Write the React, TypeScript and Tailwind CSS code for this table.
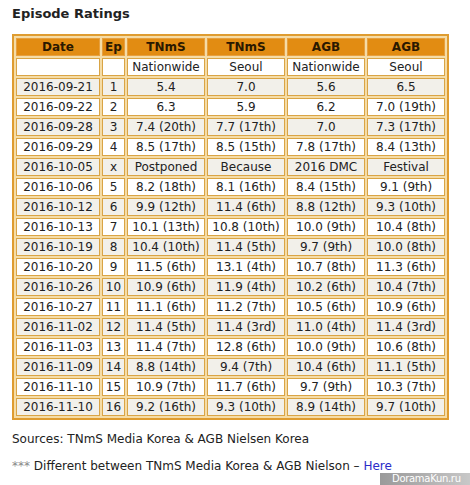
import React from 'react'

type Row = [string, string, string, string, string, string]

const ROWS: Row[] = [
  ['2016-09-21', '1', '5.4', '7.0', '5.6', '6.5'],
  ['2016-09-22', '2', '6.3', '5.9', '6.2', '7.0 (19th)'],
  ['2016-09-28', '3', '7.4 (20th)', '7.7 (17th)', '7.0', '7.3 (17th)'],
  ['2016-09-29', '4', '8.5 (17th)', '8.5 (15th)', '7.8 (17th)', '8.4 (13th)'],
  ['2016-10-05', 'x', 'Postponed', 'Because', '2016 DMC', 'Festival'],
  ['2016-10-06', '5', '8.2 (18th)', '8.1 (16th)', '8.4 (15th)', '9.1 (9th)'],
  ['2016-10-12', '6', '9.9 (12th)', '11.4 (6th)', '8.8 (12th)', '9.3 (10th)'],
  ['2016-10-13', '7', '10.1 (13th)', '10.8 (10th)', '10.0 (9th)', '10.4 (8th)'],
  ['2016-10-19', '8', '10.4 (10th)', '11.4 (5th)', '9.7 (9th)', '10.0 (8th)'],
  ['2016-10-20', '9', '11.5 (6th)', '13.1 (4th)', '10.7 (8th)', '11.3 (6th)'],
  ['2016-10-26', '10', '10.9 (6th)', '11.9 (4th)', '10.2 (6th)', '10.4 (7th)'],
  ['2016-10-27', '11', '11.1 (6th)', '11.2 (7th)', '10.5 (6th)', '10.9 (6th)'],
  ['2016-11-02', '12', '11.4 (5th)', '11.4 (3rd)', '11.0 (4th)', '11.4 (3rd)'],
  ['2016-11-03', '13', '11.4 (7th)', '12.8 (6th)', '10.0 (9th)', '10.6 (8th)'],
  ['2016-11-09', '14', '8.8 (14th)', '9.4 (7th)', '10.4 (6th)', '11.1 (5th)'],
  ['2016-11-10', '15', '10.9 (7th)', '11.7 (6th)', '9.7 (9th)', '10.3 (7th)'],
  ['2016-11-10', '16', '9.2 (16th)', '9.3 (10th)', '8.9 (14th)', '9.7 (10th)'],
]

const WIDTHS = ['w-[84px]', 'w-[23px]', 'w-[78px]', 'w-[78px]', 'w-[78px]', 'w-[78px]']

const cell = 'p-0 h-[18px] border border-[#d9a445] text-center leading-[16px] whitespace-nowrap'

export default function App() {
  return (
    <div className="relative w-[470px] h-[485px] bg-white overflow-hidden px-[12px] pt-[6px] text-[#222] text-[12px] font-['DejaVu_Sans',Verdana,sans-serif]">
      <h3 className="text-[13px] font-bold leading-[16px] text-[#222]">Episode Ratings</h3>

      {/* Ratings table */}
      <table className="mt-[12px] border-separate border-spacing-[2px] border-2 border-[#df9c30] bg-[#f5dca6] table-fixed">
        <thead>
          <tr>
            {['Date', 'Ep', 'TNmS', 'TNmS', 'AGB', 'AGB'].map((h, i) => (
              <th key={i} className={`${cell} ${WIDTHS[i]} bg-[#e28c12] font-bold text-[#2a1800] border-[#e6a040]`}>
                {h}
              </th>
            ))}
          </tr>
        </thead>
        <tbody>
          <tr>
            {['', '', 'Nationwide', 'Seoul', 'Nationwide', 'Seoul'].map((h, i) => (
              <td key={i} className={`${cell} bg-white`}>{h}</td>
            ))}
          </tr>
          {ROWS.map((r, ri) => (
            <tr key={ri}>
              {r.map((v, ci) => (
                <td key={ci} className={`${cell} ${ri % 2 === 0 ? 'bg-[#f2f0ea]' : 'bg-white'}`}>
                  {v}
                </td>
              ))}
            </tr>
          ))}
        </tbody>
      </table>

      <p className="mt-[11px] leading-[16px]">Sources: TNmS Media Korea &amp; AGB Nielsen Korea</p>
      <p className="mt-[11px] leading-[16px]">
        <span className="text-[#888]">***</span> Different between TNmS Media Korea &amp; AGB Nielson – <a className="text-[#2b2bc8]">Here</a>
      </p>

      {/* watermark */}
      <div className="absolute right-0 bottom-0 w-[90px] h-[12px] bg-gradient-to-r from-[#9a9a9a] via-[#b0b0b0] to-[#c8c8c8] text-white text-[10px] leading-[12px] pl-[12px] tracking-[-0.3px] whitespace-nowrap font-['DejaVu_Sans',sans-serif]">
        DoramaKun.ru
      </div>
    </div>
  )
}
